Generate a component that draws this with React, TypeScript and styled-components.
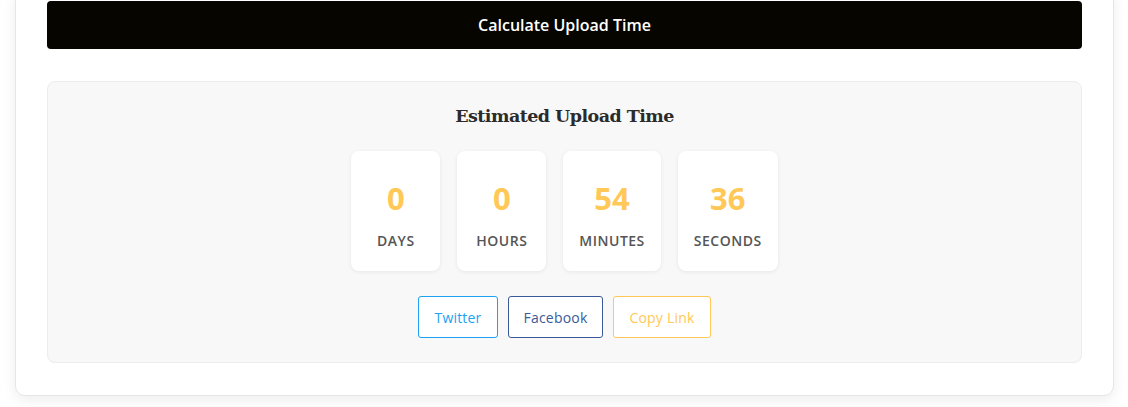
import styled, { createGlobalStyle } from 'styled-components';

const GlobalStyle = createGlobalStyle`
  body {
    margin: 0;
    background: #ffffff;
    font-family: 'Open Sans', 'Noto Sans', sans-serif;
  }
`;

const Page = styled.div`
  padding: 0 14px 12px 15px;
`;

const Card = styled.div`
  margin-top: -12px;
  padding: 12px 31px 32px 31px;
  background: #ffffff;
  border: 1px solid #e6e6e6;
  border-radius: 10px;
  box-shadow: 0 4px 14px rgba(0, 0, 0, 0.07);
`;

const CalcButton = styled.button`
  display: block;
  width: 100%;
  height: 48px;
  border: none;
  border-radius: 4px;
  background: #070500;
  color: #ffffff;
  font-family: 'Open Sans', sans-serif;
  font-size: 16px;
  font-weight: 600;
  cursor: pointer;
`;

const Result = styled.div`
  margin-top: 32px;
  padding: 21px 20px 24px 20px;
  background: #f8f8f8;
  border: 1px solid #ececec;
  border-radius: 8px;
  display: flex;
  flex-direction: column;
  align-items: center;
`;

const Title = styled.h3`
  margin: 0;
  font-family: 'DejaVu Serif', 'Liberation Serif', serif;
  font-size: 17.5px;
  line-height: 26px;
  font-weight: 700;
  color: #2b2b2b;
  letter-spacing: -0.55px;
`;

const Units = styled.div`
  display: flex;
  gap: 17px;
  margin-top: 22px;
`;

const Unit = styled.div`
  min-width: 89px;
  box-sizing: border-box;
  padding: 25px 16px 21px 16px;
  background: #ffffff;
  border-radius: 8px;
  box-shadow: 0 1px 4px rgba(0, 0, 0, 0.07);
  display: flex;
  flex-direction: column;
  align-items: center;
`;

const Value = styled.span`
  font-size: 31px;
  font-weight: 700;
  line-height: 44px;
  color: #ffc857;
`;

const Label = styled.span`
  margin-top: 12px;
  font-size: 14px;
  line-height: 18px;
  font-weight: 600;
  letter-spacing: 0.5px;
  text-transform: uppercase;
  color: #555555;
`;

const Shares = styled.div`
  display: flex;
  gap: 10px;
  margin-top: 25px;
`;

const ShareButton = styled.button<{ $color: string }>`
  height: 42px;
  padding: 0 15px;
  background: #ffffff;
  border: 1px solid ${(p) => p.$color};
  border-radius: 3px;
  color: ${(p) => p.$color};
  font-family: 'Open Sans', sans-serif;
  font-size: 14px;
  letter-spacing: 0.2px;
  cursor: pointer;
`;

const units = [
  { value: 0, label: 'Days' },
  { value: 0, label: 'Hours' },
  { value: 54, label: 'Minutes' },
  { value: 36, label: 'Seconds' },
];

const shares = [
  { text: 'Twitter', color: '#1da1f2' },
  { text: 'Facebook', color: '#3b5998' },
  { text: 'Copy Link', color: '#ffc857' },
];

const App = () => (
  <Page>
    <GlobalStyle />
    <Card>
      <CalcButton>Calculate Upload Time</CalcButton>
      <Result>
        <Title>Estimated Upload Time</Title>
        <Units>
          {units.map((u) => (
            <Unit key={u.label}>
              <Value>{u.value}</Value>
              <Label>{u.label}</Label>
            </Unit>
          ))}
        </Units>
        <Shares>
          {shares.map((s) => (
            <ShareButton key={s.text} $color={s.color}>
              {s.text}
            </ShareButton>
          ))}
        </Shares>
      </Result>
    </Card>
  </Page>
);

export default App;
